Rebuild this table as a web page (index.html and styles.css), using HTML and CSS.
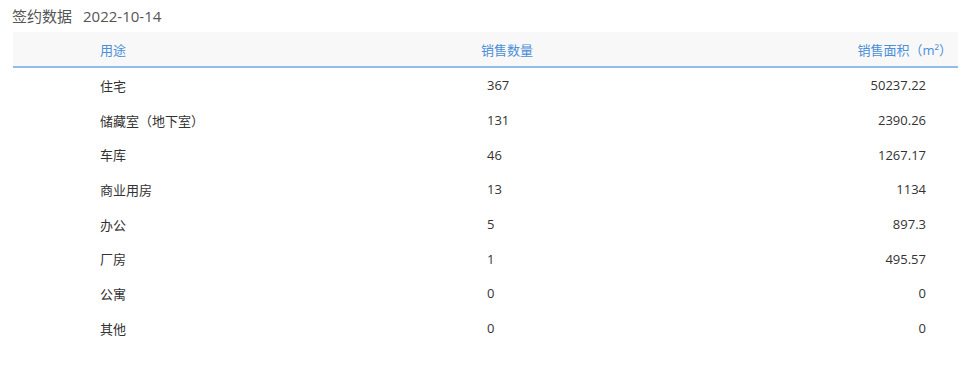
FILE: index.html
```html
<!DOCTYPE html>
<html lang="zh">
<head>
<meta charset="utf-8">
<link rel="stylesheet" href="styles.css">
</head>
<body>
<div class="page">
  <div class="title"><span class="title-label">签约数据</span><span class="title-date">2022-10-14</span></div>
  <div class="table">
    <div class="row head">
      <div class="c1">用途</div>
      <div class="c2">销售数量</div>
      <div class="c3">销售面积（m²）</div>
    </div>
    <div class="row"><div class="c1">住宅</div><div class="c2">367</div><div class="c3">50237.22</div></div>
    <div class="row"><div class="c1">储藏室（地下室）</div><div class="c2">131</div><div class="c3">2390.26</div></div>
    <div class="row"><div class="c1">车库</div><div class="c2">46</div><div class="c3">1267.17</div></div>
    <div class="row"><div class="c1">商业用房</div><div class="c2">13</div><div class="c3">1134</div></div>
    <div class="row"><div class="c1">办公</div><div class="c2">5</div><div class="c3">897.3</div></div>
    <div class="row"><div class="c1">厂房</div><div class="c2">1</div><div class="c3">495.57</div></div>
    <div class="row"><div class="c1">公寓</div><div class="c2">0</div><div class="c3">0</div></div>
    <div class="row"><div class="c1">其他</div><div class="c2">0</div><div class="c3">0</div></div>
  </div>
</div>
</body>
</html>
```
FILE: styles.css
```css
html, body {
  margin: 0;
  padding: 0;
  background: #fff;
}
body {
  font-family: "Open Sans", "Noto Sans CJK SC", sans-serif;
  color: #333;
}
.page {
  padding: 6px 19px 0 13px;
}
.title {
  font-size: 15px;
  line-height: 20px;
  color: #555;
  margin-left: -1px;
  display: flex;
  gap: 11px;
  height: 26px;
}
.table {
  display: flex;
  flex-direction: column;
}
.row {
  display: grid;
  grid-template-columns: 474px 1fr 1fr;
  height: 34.7px;
  align-items: center;
  font-size: 13px;
}
.row .c1 {
  padding-left: 87px;
}
.row .c3 {
  text-align: right;
  padding-right: 32px;
}
.row.head {
  background: #f8f8f8;
  color: #4a8fd9;
  height: 34px;
  border-bottom: 2px solid #93bde9;
}
.row.head .c2 {
  margin-left: -6px;
}
.row.head .c3 {
  padding-right: 6px;
}
```
